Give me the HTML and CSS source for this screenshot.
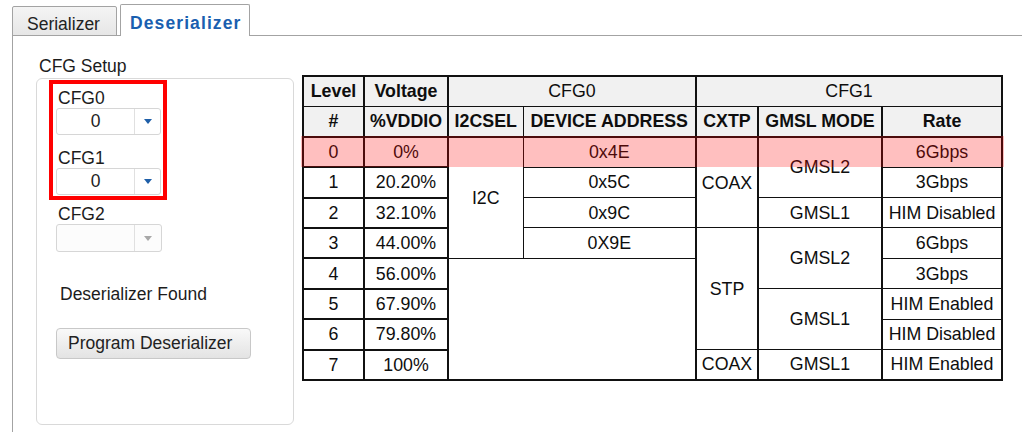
FILE: index.html
```html
<!DOCTYPE html>
<html>
<head>
<meta charset="utf-8">
<link rel="stylesheet" href="styles.css">
</head>
<body>
<div class="tabs">
  <div class="tab">Serializer</div>
  <div class="tab active">Deserializer</div>
</div>
<div class="panel">
  <div class="setup">
    <div class="setup-title">CFG Setup</div>
    <div class="group">
      <div class="highlight-box">
        <div class="field-label">CFG0</div>
        <div class="combo">
          <span class="combo-value">0</span>
          <span class="combo-btn"><svg width="8" height="5" viewBox="0 0 8 5"><path d="M0 0H8L4 5Z" fill="#1f5fa8"/></svg></span>
        </div>
        <div class="field-label second">CFG1</div>
        <div class="combo">
          <span class="combo-value">0</span>
          <span class="combo-btn"><svg width="8" height="5" viewBox="0 0 8 5"><path d="M0 0H8L4 5Z" fill="#1f5fa8"/></svg></span>
        </div>
      </div>
      <div class="field-label outside">CFG2</div>
      <div class="combo disabled outside-combo">
        <span class="combo-value"></span>
        <span class="combo-btn"><svg width="8" height="5" viewBox="0 0 8 5"><path d="M0 0H8L4 5Z" fill="#a8a8a8"/></svg></span>
      </div>
      <div class="status">Deserializer Found</div>
      <button class="btn">Program Deserializer</button>
    </div>
  </div>
  <div class="table-wrap">
    <table class="cfg">
      <colgroup>
        <col class="w-level"><col class="w-volt"><col class="w-i2c"><col class="w-addr"><col class="w-cxtp"><col class="w-gmsl"><col class="w-rate">
      </colgroup>
      <thead>
        <tr>
          <th>Level</th>
          <th>Voltage</th>
          <th colspan="2" class="reg">CFG0</th>
          <th colspan="3" class="reg">CFG1</th>
        </tr>
        <tr class="sub">
          <th>#</th>
          <th>%VDDIO</th>
          <th class="i2c">I2CSEL</th>
          <th class="addr">DEVICE ADDRESS</th>
          <th>CXTP</th>
          <th>GMSL MODE</th>
          <th>Rate</th>
        </tr>
      </thead>
      <tbody>
        <tr>
          <td class="lv">0</td><td class="lv">0%</td>
          <td rowspan="4" class="i2c">I2C</td>
          <td class="addr">0x4E</td>
          <td rowspan="3">COAX</td>
          <td rowspan="2">GMSL2</td>
          <td>6Gbps</td>
        </tr>
        <tr>
          <td class="lv">1</td><td class="lv">20.20%</td>
          <td class="addr">0x5C</td>
          <td>3Gbps</td>
        </tr>
        <tr>
          <td class="lv">2</td><td class="lv">32.10%</td>
          <td class="addr">0x9C</td>
          <td>GMSL1</td>
          <td>HIM Disabled</td>
        </tr>
        <tr>
          <td class="lv">3</td><td class="lv">44.00%</td>
          <td class="addr">0X9E</td>
          <td rowspan="4">STP</td>
          <td rowspan="2">GMSL2</td>
          <td>6Gbps</td>
        </tr>
        <tr>
          <td class="lv">4</td><td class="lv">56.00%</td>
          <td colspan="2" rowspan="4"></td>
          <td>3Gbps</td>
        </tr>
        <tr>
          <td class="lv">5</td><td class="lv">67.90%</td>
          <td rowspan="2">GMSL1</td>
          <td>HIM Enabled</td>
        </tr>
        <tr>
          <td class="lv">6</td><td class="lv">79.80%</td>
          <td>HIM Disabled</td>
        </tr>
        <tr>
          <td class="lv">7</td><td class="lv">100%</td>
          <td>COAX</td>
          <td>GMSL1</td>
          <td>HIM Enabled</td>
        </tr>
      </tbody>
    </table>
    <div class="row-hl"></div>
  </div>
</div>
</body>
</html>
```
FILE: styles.css
```css
html, body {
  margin: 0;
  padding: 0;
  background: #ffffff;
}
body {
  width: 1022px;
  height: 432px;
  overflow: hidden;
  font-family: "Liberation Sans", Arial, sans-serif;
  font-size: 17.5px;
  color: #1c1c1c;
}

/* Tabs */
.tabs {
  display: flex;
  align-items: flex-end;
  height: 36px;
  margin-left: 12px;
  box-shadow: inset 0 -1px 0 #a3a3a3;
}
.tab {
  box-sizing: border-box;
  width: 105px;
  height: 30px;
  border: 1px solid #a3a3a3;
  border-radius: 2px 2px 0 0;
  background: linear-gradient(#f4f4f4, #e6e6e6);
  padding: 7px 0 0 14px;
  line-height: 20px;
  color: #222;
}
.tab.active {
  width: 130px;
  height: 32px;
  margin-left: 3px;
  border-bottom: none;
  background: #ffffff;
  padding: 8px 0 0 9px;
  font-weight: bold;
  letter-spacing: 1.1px;
  color: #1a5fb0;
}

/* Panel */
.panel {
  margin-left: 12px;
  border-left: 1px solid #a3a3a3;
  display: flex;
  align-items: flex-start;
  height: 396px;
}
.setup {
  margin-left: 23px;
  margin-top: 20px;
}
.setup-title {
  line-height: 20px;
  padding-left: 3px;
}
.group {
  box-sizing: border-box;
  margin-top: 2px;
  width: 258px;
  height: 347px;
  border: 1px solid #d9d9d9;
  border-radius: 6px;
}
.highlight-box {
  box-sizing: border-box;
  width: 118px;
  margin: 1px 0 0 12px;
  border: 4px solid #ff0000;
  padding: 4px 2px 1px 3px;
}
.field-label {
  line-height: 20px;
  padding-left: 2px;
}
.field-label.second {
  margin-top: 13px;
}
.field-label.outside {
  margin: 4px 0 0 19px;
}
.combo {
  box-sizing: border-box;
  display: flex;
  width: 105px;
  height: 27px;
  border: 1px solid #d6d6d6;
  border-radius: 3px;
  background: #fff;
}
.combo.outside-combo {
  margin-left: 19px;
  width: 106px;
  height: 28px;
  background: #fcfcfc;
}
.combo-value {
  box-sizing: border-box;
  width: 78px;
  border-right: 1px solid #e0e0e0;
  text-align: center;
  line-height: 25px;
  color: #222;
}
.combo-btn {
  flex: 1;
  display: flex;
  align-items: center;
  justify-content: center;
}
.status {
  margin: 32px 0 0 23px;
  line-height: 20px;
}
.btn {
  display: block;
  box-sizing: border-box;
  margin: 24px 0 0 19px;
  width: 195px;
  height: 31px;
  border: 1px solid #c8c8c8;
  border-radius: 4px;
  background: linear-gradient(#f9f9f9, #e3e3e3);
  font-family: "Liberation Sans", Arial, sans-serif;
  font-size: 17.5px;
  color: #222;
  text-align: left;
  padding: 0 0 0 11px;
}

/* Table */
.table-wrap {
  position: relative;
  margin-left: 8px;
  margin-top: 39px;
}
.cfg {
  border-collapse: collapse;
  table-layout: fixed;
  width: 701px;
  border: 2px solid #111;
  font-size: 17.8px;
  color: #0e0e0e;
}
.w-level { width: 61px; }
.w-volt { width: 84px; }
.w-i2c { width: 75px; }
.w-addr { width: 173px; }
.w-cxtp { width: 62px; }
.w-gmsl { width: 124px; }
.w-rate { width: 120px; }
.cfg tr {
  height: 30.4px;
}
.cfg th,
.cfg td {
  padding: 1px 0 0 0;
  border-style: solid;
  border-color: #111;
  border-width: 1px 2px;
  text-align: center;
  vertical-align: middle;
  white-space: nowrap;
}
.cfg th {
  background: #f1f1f1;
  font-weight: bold;
}
.cfg th.reg {
  font-weight: normal;
}
.cfg tr.sub th {
  border-bottom-width: 2px;
}
.cfg .i2c {
  border-right-width: 1px;
}
.cfg .addr {
  border-left-width: 1px;
}
.cfg td.lv {
  border-top-width: 2px;
  border-bottom-width: 2px;
}
.row-hl {
  position: absolute;
  left: -1px;
  right: -1px;
  top: 61px;
  height: 31px;
  background: rgba(255, 0, 0, 0.25);
  pointer-events: none;
}
```
